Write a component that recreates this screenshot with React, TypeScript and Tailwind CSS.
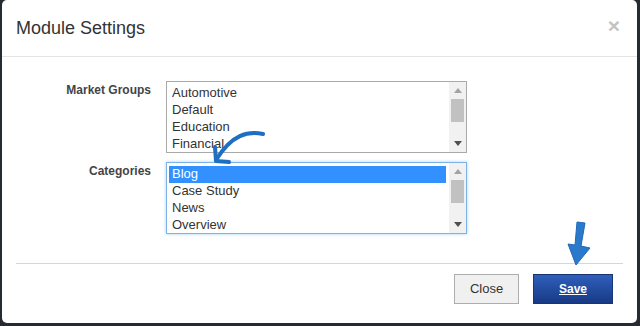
import React from 'react';

const marketGroups = ['Automotive', 'Default', 'Education', 'Financial'];
const categories = ['Blog', 'Case Study', 'News', 'Overview'];

const Listbox: React.FC<{ items: string[]; selected?: number; focused?: boolean }> = ({ items, selected, focused }) => (
  <div
    className={`relative w-[301px] h-[72px] bg-white overflow-hidden flex ${
      focused ? 'border border-[#7fb3e8] shadow-[0_0_3px_#9fd0f5]' : 'border border-[#a9a9a9]'
    }`}
  >
    <div className="flex-1 pt-[3px] pl-[2px] pr-[3px]">
      {items.map((it, i) => (
        <div
          key={it}
          className={`h-[17px] leading-[16px] text-[13px] pl-[3px] ${
            i === selected ? 'bg-[#3391ff] text-white' : 'text-[#333]'
          }`}
        >
          {it}
        </div>
      ))}
    </div>
    <div className="w-[17px] h-full bg-[#f1f1f1] flex flex-col items-center">
      <div className="h-[17px] flex items-center justify-center">
        <svg width="8" height="5" viewBox="0 0 8 5"><path d="M0 5 L4 0 L8 5Z" fill="#a3a3a3" /></svg>
      </div>
      <div className="w-[13px] h-[23px] bg-[#c1c1c1]" />
      <div className="flex-1" />
      <div className="h-[17px] flex items-center justify-center">
        <svg width="8" height="5" viewBox="0 0 8 5"><path d="M0 0 L4 5 L8 0Z" fill="#505050" /></svg>
      </div>
    </div>
  </div>
);

export default function App() {
  return (
    <div className="w-[640px] h-[326px] bg-[#262b31] pl-[2px] overflow-hidden" style={{ fontFamily: '"Liberation Sans", Arial, sans-serif' }}>
      <div className="relative w-[635px] h-[323px] bg-white rounded-[5px] flex flex-col">
        <div className="h-[57px] border-b border-[#e5e5e5] flex items-center justify-between pl-[14px] pr-[17px]">
          <h1 className="text-[18px] text-[#333]">Module Settings</h1>
          <span className="text-[21px] font-bold text-[#c3c3c3] leading-none pb-[5px]">×</span>
        </div>

        <div className="flex flex-col gap-[9px] pt-[24px] h-[206px]">
          <div className="flex">
            <div className="w-[149px] text-right text-[12px] font-bold text-[#444]">Market Groups</div>
            <div className="ml-[15px]">
              <Listbox items={marketGroups} />
            </div>
          </div>
          <div className="flex">
            <div className="w-[149px] text-right text-[12px] font-bold text-[#444]">Categories</div>
            <div className="ml-[15px]">
              <Listbox items={categories} selected={0} focused />
            </div>
          </div>
        </div>

        <div className="mx-[14px] border-t border-[#d6d6d6] flex justify-end gap-[14px] pt-[10px] pr-[10px]">
          <button className="w-[65px] h-[30px] bg-[#f0f0f0] border border-[#adadad] text-[13px] text-[#333]">Close</button>
          <button className="w-[80px] h-[30px] bg-gradient-to-b from-[#2f5fbb] to-[#183a86] border border-[#173673] text-[12px] font-bold text-white underline">
            Save
          </button>
        </div>

        <svg className="absolute left-0 top-0 pointer-events-none" width="635" height="323">
          <path d="M261 134 C246 131 230 134 214 160" fill="none" stroke="#1e6fc2" strokeWidth="4" strokeLinecap="round" />
          <path d="M213 147 L214 161 L227 162" fill="none" stroke="#1e6fc2" strokeWidth="4" strokeLinecap="round" strokeLinejoin="round" />
          <path d="M575 222 L583 223 L579 246 L588 248 L574 265 L566 244 L573 245 Z" fill="#2a7acb" stroke="#1f68b8" strokeWidth="1" strokeLinejoin="round" />
        </svg>
      </div>
    </div>
  );
}
